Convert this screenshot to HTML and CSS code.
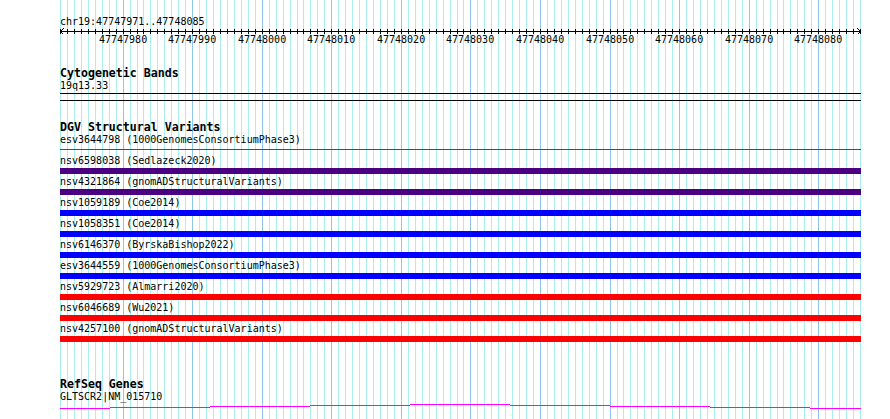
FILE: index.html
```html
<!DOCTYPE html>
<html lang="en">
<head>
    <meta charset="UTF-8">
    <meta name="viewport" content="width=device-width, initial-scale=1.0">
    <title>chr19:47747971-47748085</title>
    <link rel="stylesheet" href="styles.css">
</head>
<body>
    <div class="browser">
        <svg class="guides" id="guides" width="802" height="419"></svg>

        <div class="tracks">
            <section class="ruler">
                <div class="ruler-pos">chr19:47747971..47748085</div>
                <svg class="ruler-axis" id="axis" width="802" height="6"></svg>
                <div class="ruler-labels" id="rulerLabels"></div>
            </section>

            <section class="track cyto">
                <div class="track-title">Cytogenetic Bands</div>
                <div class="label">19q13.33</div>
                <div class="band"></div>
            </section>

            <section class="track dgv">
                <div class="track-title">DGV Structural Variants</div>
                <div class="variants">
                    <div class="item"><div class="label">esv3644798 (1000GenomesConsortiumPhase3)</div><div class="bar thin red"></div></div>
                    <div class="item"><div class="label">nsv6598038 (Sedlazeck2020)</div><div class="bar purple"></div></div>
                    <div class="item"><div class="label">nsv4321864 (gnomADStructuralVariants)</div><div class="bar purple"></div></div>
                    <div class="item"><div class="label">nsv1059189 (Coe2014)</div><div class="bar blue"></div></div>
                    <div class="item"><div class="label">nsv1058351 (Coe2014)</div><div class="bar blue"></div></div>
                    <div class="item"><div class="label">nsv6146370 (ByrskaBishop2022)</div><div class="bar blue"></div></div>
                    <div class="item"><div class="label">esv3644559 (1000GenomesConsortiumPhase3)</div><div class="bar blue"></div></div>
                    <div class="item"><div class="label">nsv5929723 (Almarri2020)</div><div class="bar red"></div></div>
                    <div class="item"><div class="label">nsv6046689 (Wu2021)</div><div class="bar red"></div></div>
                    <div class="item"><div class="label">nsv4257100 (gnomADStructuralVariants)</div><div class="bar red"></div></div>
                </div>
            </section>

            <section class="track refseq">
                <div class="track-title">RefSeq Genes</div>
                <div class="label">GLTSCR2|NM_015710</div>
                <svg class="gene" width="802" height="8">
                    <path d="M0 5.5H50M50 4.5H150M150 3.5H250M250 2.5H350M350 1.5H450M450 2.5H550M550 3.5H650M650 4.5H750M750 5.5H801" />
                </svg>
            </section>
        </div>
    </div>

    <script>
        const START = 47747971;
        const END = 47748085;
        const scale = 800 / (END - START + 1);
        const ns = 'http://www.w3.org/2000/svg';

        function line(svg, x1, y1, x2, y2, cls) {
            const l = document.createElementNS(ns, 'line');
            l.setAttribute('x1', x1);
            l.setAttribute('y1', y1);
            l.setAttribute('x2', x2);
            l.setAttribute('y2', y2);
            l.setAttribute('class', cls);
            svg.appendChild(l);
        }

        const guides = document.getElementById('guides');
        const axis = document.getElementById('axis');
        const labels = document.getElementById('rulerLabels');

        // one guide line and one tick per base
        for (let i = 0; i <= END - START + 1; i++) {
            const x = Math.round(i * scale) + 0.5;
            const major = (START + i) % 10 === 0;
            line(guides, x, 0, x, 419, major ? 'guide major' : 'guide');
            line(axis, x, 1, x, 6, 'tick');

            if (major && START + i <= END) {
                const span = document.createElement('span');
                span.textContent = START + i;
                span.style.left = (Math.round(i * scale) - 24) + 'px';
                labels.appendChild(span);
            }
        }

        line(axis, 0, 3.5, 801, 3.5, 'tick');
        const arrows = document.createElementNS(ns, 'path');
        arrows.setAttribute('d', 'M3.5 0.5L0.5 3.5L3.5 6.5M797.5 0.5L800.5 3.5L797.5 6.5');
        arrows.setAttribute('class', 'arrow');
        axis.appendChild(arrows);
    </script>
</body>
</html>
```

FILE: styles.css
```css
body {
    margin: 0;
    background-color: #fff;
    font-family: "DejaVu Sans Mono", "Liberation Mono", monospace;
    font-size: 10px;
    color: #000;
}

.browser {
    position: relative;
    width: 890px;
    height: 419px;
    overflow: hidden;
}

/* base-level guide lines, under the tracks */
.guides {
    position: absolute;
    left: 60px;
    top: 0;
    shape-rendering: crispEdges;
}

.guide {
    stroke: #aaeeee;
    stroke-width: 1;
}

.guide.major {
    stroke: #8ec6ee;
}

.tracks {
    position: relative;
    padding-left: 60px;
    width: 802px;
}

.ruler-pos {
    margin-top: 16px;
    line-height: 12px;
    height: 12px;
}

.ruler-axis {
    display: block;
    overflow: visible;
    shape-rendering: crispEdges;
}

.tick {
    stroke: #000;
    stroke-width: 1;
}

.arrow {
    fill: none;
    stroke: #000;
    stroke-width: 1;
}

.ruler-labels {
    position: relative;
    height: 12px;
    line-height: 12px;
}

.ruler-labels span {
    position: absolute;
    top: 0;
}

.track-title {
    font-weight: bold;
    font-size: 11.6px;
    line-height: 13px;
    height: 13px;
}

.label {
    line-height: 12px;
    height: 12px;
    white-space: nowrap;
}

.cyto {
    margin-top: 21px;
}

.band {
    margin-top: 1px;
    width: 801px;
    height: 8px;
    box-sizing: border-box;
    border-top: 1px solid #000;
    border-bottom: 1px solid #000;
}

.dgv {
    margin-top: 20px;
}

.variants {
    display: flex;
    flex-direction: column;
    gap: 2px;
}

.item .label {
    padding-bottom: 1px;
}

.bar {
    width: 801px;
    height: 6px;
}

.bar.thin {
    height: 1px;
    margin: 2px 0 3px;
}

.purple {
    background-color: #4b0082;
}

.blue {
    background-color: #0000ff;
}

.red {
    background-color: #ff0000;
}

.refseq {
    margin-top: 36px;
}

.gene {
    display: block;
    shape-rendering: crispEdges;
}

.gene path {
    fill: none;
    stroke: #ff00ff;
    stroke-width: 1;
}
```
